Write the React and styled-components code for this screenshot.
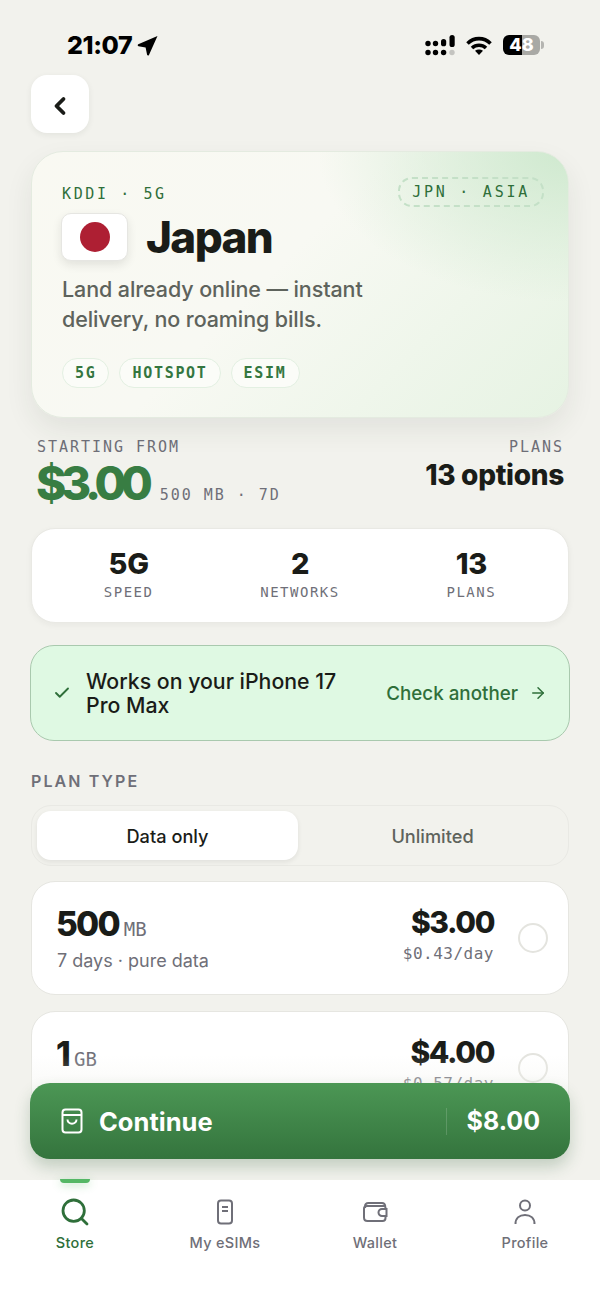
import styled, { createGlobalStyle } from 'styled-components';
import { Check, ArrowRight, ChevronLeft, Search } from 'lucide-react';

const GlobalStyle = createGlobalStyle`
  html, body {
    margin: 0;
    padding: 0;
    background: #f2f2ed;
  }
  * {
    box-sizing: border-box;
  }
`;

const MONO = `"DejaVu Sans Mono", "Liberation Mono", monospace`;
const SANS = `Inter, "Liberation Sans", sans-serif`;
const GREEN = '#2f6f3a';
const GREY = '#6f6f78';

const Page = styled.div`
  position: relative;
  width: 600px;
  height: 1304px;
  overflow: hidden;
  background: #f2f2ed;
  font-family: ${SANS};
  color: #1a1c18;
`;

const StatusBar = styled.div`
  display: flex;
  align-items: center;
  justify-content: space-between;
  height: 75px;
  padding: 15px 55px 0 67px;
`;

const Clock = styled.div`
  display: flex;
  align-items: center;
  gap: 5px;
  font-size: 25px;
  font-weight: 800;
  letter-spacing: -0.4px;
  color: #000;
`;

const StatusIcons = styled.div`
  display: flex;
  align-items: center;
  gap: 11px;
`;

const Battery = styled.div`
  position: relative;
  width: 37px;
  height: 20px;
  margin-right: 5px;
  border-radius: 6px;
  background: linear-gradient(90deg, #000 51%, #a9a9a5 51%);
  color: #fff;
  font-size: 18px;
  font-weight: 800;
  line-height: 20px;
  text-align: center;

  &::after {
    content: '';
    position: absolute;
    right: -4px;
    top: 6px;
    width: 3px;
    height: 8px;
    border-radius: 0 3px 3px 0;
    background: #b5b5b1;
  }
`;

const Content = styled.div`
  padding: 0 31px;
`;

const BackButton = styled.button`
  display: flex;
  align-items: center;
  justify-content: center;
  width: 58px;
  height: 58px;
  padding: 3px 0 0;
  border: none;
  border-radius: 16px;
  background: #fff;
  color: #1a1c18;
  box-shadow: 0 2px 6px rgba(30, 40, 30, 0.07);
`;

const Hero = styled.section`
  position: relative;
  height: 267px;
  margin-top: 18px;
  padding: 33px 30px 0;
  border: 1px solid #e4ebe0;
  border-radius: 32px;
  background:
    radial-gradient(ellipse 250px 150px at 100% 0%, #cfe9cf 0%, rgba(207, 233, 207, 0) 100%),
    linear-gradient(135deg, #f9f9f2 0%, #f8f9f3 45%, #e6f3e3 100%);
  box-shadow: 0 12px 28px rgba(40, 50, 40, 0.08);
`;

const Eyebrow = styled.div`
  font-family: ${MONO};
  font-size: 15px;
  font-weight: 500;
  line-height: 18px;
  letter-spacing: 2.6px;
  color: ${GREEN};
`;

const RegionTag = styled.div`
  position: absolute;
  top: 25px;
  right: 24px;
  height: 30px;
  padding: 0 12px;
  border: 2px dashed #c4e0c7;
  border-radius: 14px;
  font-family: ${MONO};
  font-size: 15px;
  font-weight: 500;
  line-height: 27px;
  letter-spacing: 2.75px;
  color: ${GREEN};
`;

const TitleRow = styled.div`
  display: flex;
  align-items: center;
  gap: 18px;
  margin-top: 10px;
`;

const Flag = styled.div`
  display: flex;
  align-items: center;
  justify-content: center;
  width: 67px;
  height: 48px;
  margin-left: -1px;
  border: 1px solid #e6e6e2;
  border-radius: 10px;
  background: #fff;
  box-shadow: 0 4px 10px rgba(30, 30, 30, 0.1);

  &::before {
    content: '';
    width: 30px;
    height: 30px;
    border-radius: 50%;
    background: #ae1f33;
  }
`;

const Title = styled.h1`
  margin: 0;
  font-size: 44px;
  font-weight: 800;
  line-height: 48px;
  letter-spacing: -1.6px;
  color: #1a1c18;
`;

const Lead = styled.p`
  width: 320px;
  margin: 13px 0 0;
  font-size: 21.5px;
  font-weight: 500;
  line-height: 30px;
  letter-spacing: -0.1px;
  color: #5e635c;
`;

const Chips = styled.div`
  display: flex;
  gap: 10px;
  margin-top: 24px;
`;

const Chip = styled.span`
  height: 30px;
  padding: 0 12px;
  border: 1px solid #e3f0e2;
  border-radius: 15px;
  background: #fbfcf8;
  font-family: ${MONO};
  font-size: 15px;
  font-weight: 700;
  line-height: 28px;
  letter-spacing: 1.7px;
  color: #34763f;
`;

const PriceRow = styled.div`
  display: flex;
  justify-content: space-between;
  margin-top: 21px;
  padding: 0 5px 0 6px;
`;

const MiniLabel = styled.div`
  font-family: ${MONO};
  font-size: 15px;
  line-height: 16px;
  letter-spacing: 1.97px;
  color: ${GREY};
`;

const PriceLine = styled.div`
  display: flex;
  align-items: baseline;
  gap: 12px;
  margin-top: 3px;
`;

const Price = styled.span`
  margin-left: -1px;
  font-size: 46px;
  font-weight: 800;
  line-height: 50px;
  letter-spacing: -5.3px;
  color: #387d43;
`;

const PriceNote = styled.span`
  font-family: ${MONO};
  font-size: 15px;
  letter-spacing: 1.97px;
  color: ${GREY};
`;

const PlansCol = styled.div`
  text-align: right;
`;

const PlansCount = styled.div`
  margin-top: 4px;
  font-size: 28px;
  font-weight: 800;
  line-height: 32px;
  letter-spacing: -0.3px;
`;

const Stats = styled.div`
  display: grid;
  grid-template-columns: repeat(3, 1fr);
  height: 95px;
  margin-top: 20px;
  padding: 0 11px;
  border: 1px solid #e9e9e4;
  border-radius: 24px;
  background: #fff;
  box-shadow: 0 2px 6px rgba(30, 40, 30, 0.05);
`;

const Stat = styled.div`
  display: flex;
  flex-direction: column;
  align-items: center;
  justify-content: center;
  padding-bottom: 4px;
`;

const StatValue = styled.div`
  font-size: 29px;
  font-weight: 800;
  line-height: 34px;
  letter-spacing: -0.3px;
`;

const StatLabel = styled.div`
  margin-top: 3px;
  font-family: ${MONO};
  font-size: 14px;
  line-height: 16px;
  letter-spacing: 1.5px;
  color: ${GREY};
`;

const Compat = styled.div`
  display: flex;
  align-items: center;
  height: 96px;
  margin: 22px -1px 0;
  padding: 0 22px 0 22px;
  border: 1px solid #a9c9ae;
  border-radius: 24px;
  background: #dff9e3;
  color: ${GREEN};
`;

const CompatText = styled.div`
  width: 272px;
  margin-left: 15px;
  font-size: 21.3px;
  font-weight: 500;
  line-height: 24.5px;
  color: #1a1c18;
`;

const CompatLink = styled.div`
  display: flex;
  align-items: center;
  gap: 11px;
  margin-left: auto;
  font-size: 18.8px;
  font-weight: 500;
  white-space: nowrap;
`;

const SectionLabel = styled.div`
  margin-top: 30px;
  font-size: 16px;
  font-weight: 600;
  line-height: 20px;
  letter-spacing: 2.1px;
  color: ${GREY};
`;

const Segments = styled.div`
  display: grid;
  grid-template-columns: 1fr 1fr;
  gap: 4px;
  height: 61px;
  margin-top: 14px;
  padding: 5px;
  border: 1px solid #e9e9e4;
  border-radius: 20px;
`;

const Segment = styled.div`
  display: flex;
  align-items: center;
  justify-content: center;
  border-radius: 14px;
  font-size: 18.2px;
  font-weight: 500;
  color: ${(p) => (p.$active ? '#1a1c18' : '#5e635c')};
  background: ${(p) => (p.$active ? '#fff' : 'transparent')};
  box-shadow: ${(p) => (p.$active ? '0 2px 5px rgba(30, 30, 30, 0.08)' : 'none')};
`;

const PlanCard = styled.div`
  display: flex;
  align-items: center;
  height: 114px;
  margin-top: ${(p) => p.$gap}px;
  padding: 0 20px 0 25px;
  border: 1px solid #e6e6e1;
  border-radius: 24px;
  background: #fff;
`;

const PlanInfo = styled.div`
  flex: 1;
`;

const PlanSize = styled.div`
  display: flex;
  align-items: baseline;
  gap: 5px;
  margin-left: -1px;
  font-size: 33.5px;
  font-weight: 800;
  line-height: 40px;
  letter-spacing: -1.8px;
`;

const PlanUnit = styled.span`
  font-family: ${MONO};
  font-size: 19px;
  font-weight: 500;
  letter-spacing: 0;
  color: ${GREY};
`;

const PlanMeta = styled.div`
  font-size: 18px;
  line-height: 24px;
  color: ${GREY};
`;

const PlanPrice = styled.div`
  padding-bottom: 8px;
  text-align: right;
`;

const PlanAmount = styled.div`
  font-size: 30px;
  font-weight: 800;
  line-height: 36px;
  letter-spacing: -1.4px;
`;

const PlanDaily = styled.div`
  margin-top: 4px;
  font-family: ${MONO};
  font-size: 16px;
  line-height: 20px;
  letter-spacing: 0.5px;
  color: ${GREY};
`;

const Radio = styled.div`
  width: 30px;
  height: 30px;
  margin-left: 24px;
  border: 2px solid #e4e4df;
  border-radius: 50%;
`;

const Fade = styled.div`
  position: absolute;
  left: 0;
  right: 0;
  top: 1055px;
  height: 125px;
  background: linear-gradient(180deg, rgba(242, 242, 237, 0) 0%, #f2f2ed 65%);
`;

const Cta = styled.button`
  position: absolute;
  left: 30px;
  top: 1083px;
  display: flex;
  align-items: center;
  width: 540px;
  height: 76px;
  padding: 0 30px 0 31px;
  border: none;
  border-radius: 20px;
  background: linear-gradient(180deg, #4c9755 0%, #34743d 100%);
  box-shadow: 0 8px 16px rgba(40, 90, 50, 0.24);
  color: #fff;
  font-family: ${SANS};
`;

const CtaLabel = styled.span`
  margin-left: 16px;
  font-size: 25.5px;
  font-weight: 700;
`;

const CtaPrice = styled.span`
  margin-left: auto;
  padding-left: 20px;
  border-left: 1px solid rgba(255, 255, 255, 0.16);
  font-size: 25px;
  font-weight: 700;
  line-height: 27px;
`;

const TabBar = styled.nav`
  position: absolute;
  left: 0;
  right: 0;
  top: 1180px;
  bottom: 0;
  display: grid;
  grid-template-columns: repeat(4, 150px);
  background: #fff;
`;

const Tab = styled.div`
  position: relative;
  display: flex;
  flex-direction: column;
  align-items: center;
  padding-top: 15px;
  color: ${(p) => (p.$active ? GREEN : GREY)};
  font-size: 14.5px;
  font-weight: 500;
  letter-spacing: 0.3px;

  ${(p) =>
    p.$active &&
    `&::before {
      content: '';
      position: absolute;
      top: -1px;
      left: 60px;
      width: 30px;
      height: 4px;
      border-radius: 0 0 4px 4px;
      background: #54b765;
      box-shadow: 0 2px 8px rgba(84, 183, 101, 0.45);
    }`}
`;

const TabIcon = styled.div`
  display: flex;
  align-items: center;
  justify-content: center;
  height: 34px;
  margin-bottom: 5px;
`;

function SignalIcon() {
  return (
    <svg width="30" height="21" viewBox="0 0 30 21" fill="#000">
      <circle cx="3" cy="8.500" r="2.700" />
      <circle cx="3" cy="17.500" r="2.700" />
      <circle cx="10.500" cy="8.500" r="2.700" />
      <circle cx="10.500" cy="17.500" r="2.700" />
      <rect x="16" y="4" width="5.200" height="7.300" rx="2.600" />
      <circle cx="18.600" cy="17.500" r="2.700" />
      <rect x="24.500" y="0" width="5.200" height="12" rx="2.600" />
      <circle cx="27" cy="17.500" r="2.700" fill="#c4c4c0" />
    </svg>
  );
}

function WifiIcon() {
  return (
    <svg width="26" height="19" viewBox="0 0 26 19" fill="none" stroke="#000" strokeWidth="3.600">
      <path d="M1.500 7.500C8 1 18 1 24.500 7.500" />
      <path d="M6 12C10 8.300 16 8.300 20 12" />
      <path d="M13 19 9 14.800C11.300 13.200 14.700 13.200 17 14.800Z" fill="#000" stroke="none" />
    </svg>
  );
}

function LocationIcon() {
  return (
    <svg width="21" height="21" viewBox="0 0 20 20" fill="#000">
      <path d="M19.500 1 11.400 19c-.4.8-1.600.7-1.800-.2L8.200 11.800 1.400 10.600c-.9-.2-1-1.300-.2-1.700z" />
    </svg>
  );
}

function BagIcon() {
  return (
    <svg width="22" height="26" viewBox="0 0 22 26" fill="none" stroke="currentColor" strokeWidth="2">
      <rect x="1.500" y="1.500" width="19" height="23" rx="3" />
      <path d="M1.500 7h19" />
      <path d="M6.500 11.500c0 5.500 9 5.500 9 0" />
    </svg>
  );
}

function SimIcon() {
  return (
    <svg width="18" height="26" viewBox="0 0 18 26" fill="none" stroke="currentColor" strokeWidth="2">
      <rect x="2" y="1.500" width="14" height="23" rx="3" />
      <path d="M6 8h6M6 12h6" />
    </svg>
  );
}

function WalletIcon() {
  return (
    <svg width="26" height="22" viewBox="0 0 26 22" fill="none" stroke="currentColor" strokeWidth="2">
      <path d="M3 7V5.500C3 3.500 4.500 2 6.500 2H20c2 0 3 1.200 3.200 3" />
      <path d="M23.500 8V7C23.500 5.700 23 5 22 5H5C3.300 5 2 6 2 7.500V16.500C2 18.700 3.300 20 5.500 20H20.500C22.500 20 23.500 18.800 23.500 17V15" />
      <path d="M24.500 8H20a3.500 3.500 0 0 0 0 7H24.500Z" />
    </svg>
  );
}

function PersonIcon() {
  return (
    <svg width="24" height="26" viewBox="0 0 24 26" fill="none" stroke="currentColor" strokeWidth="2">
      <circle cx="12" cy="6.500" r="5" />
      <path d="M2.500 25c0-6 4-9 9.500-9s9.500 3 9.500 9" />
    </svg>
  );
}

const plans = [
  { size: '500', unit: 'MB', meta: '7 days · pure data', price: '$3.00', daily: '$0.43/day', gap: 15 },
  { size: '1', unit: 'GB', meta: '7 days · pure data', price: '$4.00', daily: '$0.57/day', gap: 16 },
];

export default function App() {
  return (
    <Page>
      <GlobalStyle />
      <StatusBar>
        <Clock>
          21:07
          <LocationIcon />
        </Clock>
        <StatusIcons>
          <SignalIcon />
          <WifiIcon />
          <Battery>48</Battery>
        </StatusIcons>
      </StatusBar>

      <Content>
        <BackButton aria-label="Back">
          <ChevronLeft size={28} strokeWidth={3.3} />
        </BackButton>

        <Hero>
          <Eyebrow>KDDI · 5G</Eyebrow>
          <RegionTag>JPN · ASIA</RegionTag>
          <TitleRow>
            <Flag />
            <Title>Japan</Title>
          </TitleRow>
          <Lead>Land already online — instant delivery, no roaming bills.</Lead>
          <Chips>
            <Chip>5G</Chip>
            <Chip>HOTSPOT</Chip>
            <Chip>ESIM</Chip>
          </Chips>
        </Hero>

        <PriceRow>
          <div>
            <MiniLabel>STARTING FROM</MiniLabel>
            <PriceLine>
              <Price>$3.00</Price>
              <PriceNote>500 MB · 7D</PriceNote>
            </PriceLine>
          </div>
          <PlansCol>
            <MiniLabel>PLANS</MiniLabel>
            <PlansCount>13 options</PlansCount>
          </PlansCol>
        </PriceRow>

        <Stats>
          <Stat>
            <StatValue>5G</StatValue>
            <StatLabel>SPEED</StatLabel>
          </Stat>
          <Stat>
            <StatValue>2</StatValue>
            <StatLabel>NETWORKS</StatLabel>
          </Stat>
          <Stat>
            <StatValue>13</StatValue>
            <StatLabel>PLANS</StatLabel>
          </Stat>
        </Stats>

        <Compat>
          <Check size={18} strokeWidth={2.5} />
          <CompatText>Works on your iPhone 17 Pro Max</CompatText>
          <CompatLink>
            Check another
            <ArrowRight size={18} strokeWidth={2} />
          </CompatLink>
        </Compat>

        <SectionLabel>PLAN TYPE</SectionLabel>
        <Segments>
          <Segment $active>Data only</Segment>
          <Segment>Unlimited</Segment>
        </Segments>

        {plans.map((plan) => (
          <PlanCard key={plan.size} $gap={plan.gap}>
            <PlanInfo>
              <PlanSize>
                {plan.size}
                <PlanUnit>{plan.unit}</PlanUnit>
              </PlanSize>
              <PlanMeta>{plan.meta}</PlanMeta>
            </PlanInfo>
            <PlanPrice>
              <PlanAmount>{plan.price}</PlanAmount>
              <PlanDaily>{plan.daily}</PlanDaily>
            </PlanPrice>
            <Radio />
          </PlanCard>
        ))}
      </Content>

      <Fade />

      <Cta>
        <BagIcon />
        <CtaLabel>Continue</CtaLabel>
        <CtaPrice>$8.00</CtaPrice>
      </Cta>

      <TabBar>
        <Tab $active>
          <TabIcon>
            <Search size={32} strokeWidth={2.1} />
          </TabIcon>
          Store
        </Tab>
        <Tab>
          <TabIcon>
            <SimIcon />
          </TabIcon>
          My eSIMs
        </Tab>
        <Tab>
          <TabIcon>
            <WalletIcon />
          </TabIcon>
          Wallet
        </Tab>
        <Tab>
          <TabIcon>
            <PersonIcon />
          </TabIcon>
          Profile
        </Tab>
      </TabBar>
    </Page>
  );
}
